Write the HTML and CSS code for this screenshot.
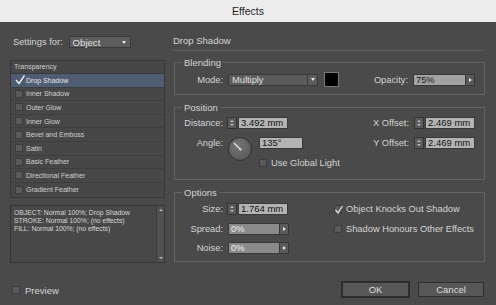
FILE: index.html
```html
<!DOCTYPE html>
<html lang="en">
<head>
    <meta charset="UTF-8">
    <title>Effects</title>
    <link rel="stylesheet" href="styles.css">
</head>
<body>
<div class="titlebar">Effects</div>

<div class="dialog">
    <!-- Left column: target + effect list -->
    <div class="left">
        <div class="settings-row">
            <span>Settings for:</span>
            <div class="dropdown settings-select"><span class="text">Object</span><i class="caret plain"></i></div>
        </div>

        <div class="effect-list">
            <div class="list-head">Transparency</div>
            <div class="list-row selected"><span class="cb checked"><svg viewBox="0 0 10 10"><polyline points="1,5 4,8.5 9.5,0.5"/></svg></span>Drop Shadow</div>
            <div class="list-row"><span class="cb"></span>Inner Shadow</div>
            <div class="list-row"><span class="cb"></span>Outer Glow</div>
            <div class="list-row"><span class="cb"></span>Inner Glow</div>
            <div class="list-row"><span class="cb"></span>Bevel and Emboss</div>
            <div class="list-row"><span class="cb"></span>Satin</div>
            <div class="list-row"><span class="cb"></span>Basic Feather</div>
            <div class="list-row"><span class="cb"></span>Directional Feather</div>
            <div class="list-row"><span class="cb"></span>Gradient Feather</div>
        </div>

        <div class="summary">
            <div class="summary-text">
                OBJECT: Normal 100%; Drop Shadow<br>
                STROKE: Normal 100%; (no effects)<br>
                FILL: Normal 100%; (no effects)
            </div>
            <div class="scrollbar"><i class="tri-up"></i><i class="tri-down"></i></div>
        </div>

        <div class="preview"><span class="cb big"></span>Preview</div>
    </div>

    <!-- Right column: drop shadow settings -->
    <div class="right">
        <div class="heading">Drop Shadow</div>

        <fieldset class="group blending">
            <legend>Blending</legend>
            <div class="row">
                <span class="lbl">Mode:</span>
                <div class="dropdown mode-select"><span class="text">Multiply</span><i class="caret"></i></div>
                <div class="swatch"></div>
                <div class="push">
                    <span class="lbl-r">Opacity:</span>
                    <div class="combo opacity"><span class="val">75%</span><i class="arrow"></i></div>
                </div>
            </div>
        </fieldset>

        <fieldset class="group position">
            <legend>Position</legend>
            <div class="row">
                <span class="lbl">Distance:</span>
                <div class="spin"><i class="tri-up"></i><i class="tri-down"></i></div>
                <div class="field">3.492 mm</div>
                <div class="push">
                    <span class="lbl-r">X Offset:</span>
                    <div class="spin"><i class="tri-up"></i><i class="tri-down"></i></div>
                    <div class="field offset">2.469 mm</div>
                </div>
            </div>
            <div class="row angle-row">
                <span class="lbl">Angle:</span>
                <svg class="dial" viewBox="0 0 24 24">
                    <defs>
                        <radialGradient id="dialFill" cx="40%" cy="35%" r="70%">
                            <stop offset="0" stop-color="#767676"/>
                            <stop offset="1" stop-color="#585858"/>
                        </radialGradient>
                    </defs>
                    <circle cx="12" cy="12" r="11.5" fill="url(#dialFill)" stroke="#2f2f2f"/>
                    <line x1="12.5" y1="12.5" x2="6" y2="6" stroke="#e8e8e8" stroke-width="1.3"/>
                    <circle cx="12.5" cy="12.5" r="1" fill="#e8e8e8"/>
                </svg>
                <div class="angle-col">
                    <div class="field angle">135°</div>
                    <div class="check-line"><span class="cb"></span>Use Global Light</div>
                </div>
                <div class="push">
                    <span class="lbl-r">Y Offset:</span>
                    <div class="spin"><i class="tri-up"></i><i class="tri-down"></i></div>
                    <div class="field offset">2.469 mm</div>
                </div>
            </div>
        </fieldset>

        <fieldset class="group options">
            <legend>Options</legend>
            <div class="row">
                <div class="opt-left">
                    <span class="lbl">Size:</span>
                    <div class="spin"><i class="tri-up"></i><i class="tri-down"></i></div>
                    <div class="field">1.764 mm</div>
                </div>
                <div class="check-line"><span class="cb ticked"><svg viewBox="0 0 10 10"><polyline points="1.5,5 4,8 8.5,1"/></svg></span>Object Knocks Out Shadow</div>
            </div>
            <div class="row">
                <div class="opt-left">
                    <span class="lbl">Spread:</span>
                    <div class="combo small"><span class="val">0%</span><i class="arrow"></i></div>
                </div>
                <div class="check-line"><span class="cb"></span>Shadow Honours Other Effects</div>
            </div>
            <div class="row">
                <div class="opt-left">
                    <span class="lbl">Noise:</span>
                    <div class="combo small"><span class="val">0%</span><i class="arrow"></i></div>
                </div>
            </div>
        </fieldset>

        <div class="buttons">
            <div class="button default">OK</div>
            <div class="button">Cancel</div>
        </div>
    </div>
</div>
</body>
</html>
```

FILE: styles.css
```css
/* Dark dialog, InDesign style */
* {
    box-sizing: border-box;
}
body {
    margin: 0;
    width: 496px;
    height: 305px;
    overflow: hidden;
    background-color: #4a4a4a;
    font-family: "Liberation Sans", Arial, sans-serif;
    font-size: 9.3px;
    color: #d4d4d4;
}
.titlebar {
    height: 22px;
    background-color: #ececec;
    color: #1e1e1e;
    font-size: 10.5px;
    display: flex;
    align-items: center;
    justify-content: center;
}
.dialog {
    display: flex;
    gap: 8px;
    padding: 12px 11px 0 10px;
}

/* ---- left column ---- */
.left {
    width: 155px;
    display: flex;
    flex-direction: column;
}
.settings-row {
    height: 16px;
    display: flex;
    align-items: center;
    gap: 6px;
    padding-left: 3px;
}
.dropdown {
    height: 12px;
    display: flex;
    align-items: center;
    background-color: #5c5c5c;
    border: 1px solid #3a3a3a;
    color: #e0e0e0;
}
.dropdown .text {
    flex: 1;
    padding-left: 3px;
}
.settings-select {
    width: 62px;
    font-size: 9.6px;
}
.caret {
    width: 10px;
    height: 100%;
    border-left: 1px solid #3a3a3a;
    display: flex;
    align-items: center;
    justify-content: center;
}
.caret.plain {
    border-left: none;
    width: 12px;
}
.caret::after {
    content: "";
    border-left: 2.5px solid transparent;
    border-right: 2.5px solid transparent;
    border-top: 3px solid #e8e8e8;
}
.effect-list {
    margin-top: 10px;
    height: 138px;
    border: 1px solid #383838;
    background-color: #474747;
    font-size: 7px;
    color: #cfcfcf;
}
.list-head {
    height: 13px;
    line-height: 12px;
    padding-left: 3px;
    border-bottom: 1px solid #393939;
}
.list-row {
    height: 13.6px;
    display: flex;
    align-items: center;
    padding-left: 4px;
    gap: 3px;
    border-bottom: 1px solid #3d3d3d;
}
.list-row:last-child {
    border-bottom: none;
}
.list-row.selected {
    background-color: #4f5d73;
    color: #e6e6e6;
}
.cb {
    width: 8px;
    height: 8px;
    flex: none;
    background-color: #5a5a5a;
    border: 1px solid #3c3c3c;
    position: relative;
}
.cb.checked {
    background: none;
    border-color: transparent;
}
.cb svg {
    position: absolute;
    left: -1px;
    top: -2px;
    width: 10px;
    height: 10px;
    fill: none;
    stroke: #ececec;
    stroke-width: 1.4;
}
.cb.ticked svg {
    top: -1px;
    stroke-width: 1.2;
}
.summary {
    margin-top: 7px;
    height: 58px;
    border: 1px solid #353535;
    background-color: #484848;
    display: flex;
}
.summary-text {
    flex: 1;
    padding: 3px 3px;
    font-size: 6.8px;
    line-height: 8px;
    color: #d8d8d8;
}
.scrollbar {
    width: 8px;
    background-color: #505050;
    border-left: 1px solid #3a3a3a;
    display: flex;
    flex-direction: column;
    align-items: center;
    justify-content: space-between;
    padding: 3px 0;
}
.tri-up {
    border-left: 2px solid transparent;
    border-right: 2px solid transparent;
    border-bottom: 2px solid #bdbdbd;
}
.tri-down {
    border-left: 2px solid transparent;
    border-right: 2px solid transparent;
    border-top: 2px solid #bdbdbd;
}
.preview {
    margin-top: 23px;
    height: 8px;
    display: flex;
    align-items: center;
    gap: 5px;
    padding-left: 2px;
    font-size: 9.5px;
}

/* ---- right column ---- */
.right {
    flex: 1;
    display: flex;
    flex-direction: column;
}
.heading {
    height: 17px;
    line-height: 14px;
    font-size: 9.5px;
    border-bottom: 1px solid #5e5e5e;
}
.group {
    margin: 5px 0 0 1px;
    padding: 3px 9px 7px 8px;
    border: 1px solid #646464;
    min-width: 0;
}
.group legend {
    padding: 0 2px;
    margin-left: -1px;
    line-height: 13px;
    font-size: 9.5px;
}
.position {
    margin-top: 6px;
    padding-bottom: 18px;
}
.options {
    margin-top: 6px;
    padding-top: 4px;
}
.row {
    display: flex;
    align-items: center;
    height: 12px;
}
.blending .row {
    height: 15px;
}
.options .row + .row {
    margin-top: 8px;
}
.options .row:last-child {
    margin-top: 7px;
}
.lbl {
    width: 40px;
    text-align: right;
    margin-right: 4px;
    flex: none;
}
.lbl-r {
    margin-right: 5px;
}
.push {
    margin-left: auto;
    display: flex;
    align-items: center;
}
.mode-select {
    width: 90px;
    margin-left: 1px;
}
.swatch {
    width: 15px;
    height: 15px;
    margin-left: 6px;
    background-color: #000;
    border: 1px solid #7a7a7a;
}
.combo {
    height: 12px;
    display: flex;
    border: 1px solid #383838;
}
.combo .val {
    flex: 1;
    padding-left: 2px;
    line-height: 10px;
    background-color: #a2a2a2;
    color: #1c1c1c;
}
.combo .arrow {
    width: 9px;
    background-color: #5a5a5a;
    border-left: 1px solid #383838;
    display: flex;
    align-items: center;
    justify-content: center;
}
.combo .arrow::after {
    content: "";
    border-top: 2.5px solid transparent;
    border-bottom: 2.5px solid transparent;
    border-left: 3px solid #e4e4e4;
}
.opacity {
    width: 62px;
}
.combo.small {
    width: 61px;
    margin-left: 1px;
}
.combo.small .val {
    background-color: #8a8a8a;
    color: #f0f0f0;
}
.spin {
    width: 10px;
    height: 12px;
    background-color: #5a5a5a;
    border: 1px solid #333;
    display: flex;
    flex-direction: column;
    align-items: center;
    justify-content: space-around;
    padding: 1px 0;
}
.field {
    height: 12px;
    width: 50px;
    margin-left: 1px;
    padding-left: 2px;
    line-height: 10px;
    background-color: #b3b3b3;
    border: 1px solid #3a3a3a;
    color: #141414;
    font-size: 9.5px;
}
.field.offset {
    width: 50px;
}
.angle-row {
    margin-top: 8px;
    height: 24px;
    align-items: flex-start;
}
.angle-row .lbl {
    line-height: 12px;
}
.dial {
    width: 24px;
    height: 24px;
    margin-left: 1px;
    flex: none;
}
.angle-col {
    margin-left: 7px;
    display: flex;
    flex-direction: column;
    gap: 10px;
}
.field.angle {
    width: 44px;
    margin-left: 0;
}
.check-line {
    height: 8px;
    display: flex;
    align-items: center;
    gap: 4px;
    white-space: nowrap;
}
.angle-row .push {
    height: 12px;
}
.opt-left {
    width: 151px;
    display: flex;
    align-items: center;
    flex: none;
}
.buttons {
    margin-top: 20px;
    display: flex;
    justify-content: flex-end;
    gap: 9px;
    padding-right: 1px;
}
.button {
    width: 66px;
    height: 15px;
    display: flex;
    align-items: center;
    justify-content: center;
    background-color: #575757;
    border: 1px solid #2f2f2f;
    color: #dedede;
    font-size: 9.5px;
}
.button.default {
    width: 67px;
    box-shadow: 0 0 0 1px #2a2a2a;
}
```
